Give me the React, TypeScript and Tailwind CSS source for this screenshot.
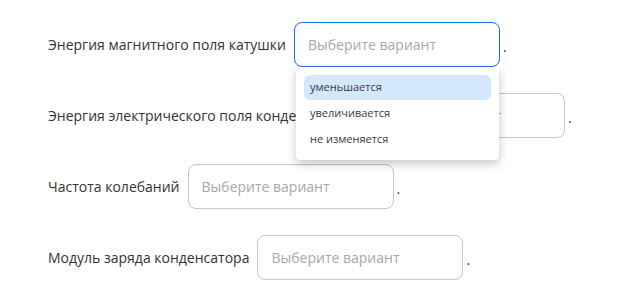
const rows = [
  { label: 'Энергия магнитного поля катушки', open: true },
  { label: 'Энергия электрического поля конденсатора', open: false },
  { label: 'Частота колебаний', open: false },
  { label: 'Модуль заряда конденсатора', open: false },
];

const options = ['уменьшается', 'увеличивается', 'не изменяется'];

function Select({ open }: { open: boolean }) {
  return (
    <div className="relative">
      <div
        className={
          open
            ? 'w-[206px] h-[45px] rounded-lg border border-[#1a6fe0] flex items-center px-[13px] text-[14px] text-[#a8a8a8] bg-white'
            : 'w-[206px] h-[45px] rounded-lg border border-[#c6c6c6] flex items-center px-[13px] text-[14px] text-[#a8a8a8] bg-white'
        }
      >
        Выберите вариант
      </div>
      {open && (
        <div className="absolute left-[2px] top-full z-10 w-[203px] bg-white rounded-b shadow-[0_4px_10px_rgba(0,0,0,0.22)] px-2 py-[8px] flex flex-col gap-[1px]">
          {options.map((o, i) => (
            <div
              key={o}
              className={
                i === 0
                  ? 'h-[25px] rounded-md bg-[#d3e7fd] px-[6px] flex items-center text-[11px] text-[#3a3a3a]'
                  : 'h-[25px] rounded-md px-[6px] flex items-center text-[11px] text-[#3a3a3a]'
              }
            >
              {o}
            </div>
          ))}
        </div>
      )}
    </div>
  );
}

export default function App() {
  return (
    <div className="w-[622px] h-[300px] bg-white pl-[48px] pt-[22px] flex flex-col gap-[26px] font-['Open_Sans',sans-serif]">
      {rows.map((r) => (
        <div key={r.label} className="flex items-center">
          <span className="text-[14px] text-[#333] mr-[8px] whitespace-nowrap">{r.label}</span>
          <Select open={r.open} />
          <span className="ml-[3px] text-[14px] text-[#333] mt-[4px]">.</span>
        </div>
      ))}
    </div>
  );
}
